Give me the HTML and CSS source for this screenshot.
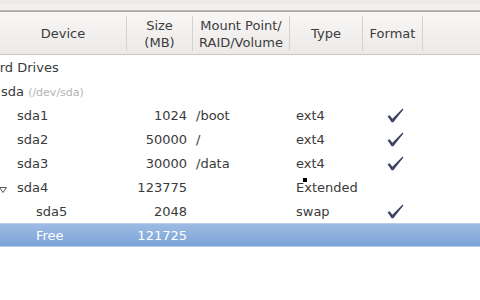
FILE: index.html
```html
<!DOCTYPE html>
<html lang="en">
<head>
    <meta charset="UTF-8">
    <title>Partitions</title>
    <link rel="stylesheet" href="styles.css">
</head>
<body>
<div class="chrome"></div>
<div class="head">
    <div class="hc c-dev">Device</div>
    <div class="hc c-size">Size<br>(MB)</div>
    <div class="hc c-mount">Mount Point/<br>RAID/Volume</div>
    <div class="hc c-type">Type</div>
    <div class="hc c-fmt">Format</div>
    <div class="hc c-rest"></div>
</div>
<div class="rows">
    <div class="row">
        <div class="c-dev"><span class="lvl0">Hard Drives</span></div>
    </div>
    <div class="row">
        <div class="c-dev"><span class="lvl1">sda <small class="path">(/dev/sda)</small></span></div>
    </div>
    <div class="row">
        <div class="c-dev"><span class="lvl2">sda1</span></div>
        <div class="c-size">1024</div>
        <div class="c-mount">/boot</div>
        <div class="c-type">ext4</div>
        <div class="c-fmt"><svg class="check" width="17" height="15" viewBox="0 0 17 15"><path d="M0.5 8.2 L2.6 7.2 L5.4 10.8 L15.6 0.6 L16.4 1.4 L6.3 14.2 L4.6 14.2 Z"/></svg></div>
    </div>
    <div class="row">
        <div class="c-dev"><span class="lvl2">sda2</span></div>
        <div class="c-size">50000</div>
        <div class="c-mount">/</div>
        <div class="c-type">ext4</div>
        <div class="c-fmt"><svg class="check" width="17" height="15" viewBox="0 0 17 15"><path d="M0.5 8.2 L2.6 7.2 L5.4 10.8 L15.6 0.6 L16.4 1.4 L6.3 14.2 L4.6 14.2 Z"/></svg></div>
    </div>
    <div class="row">
        <div class="c-dev"><span class="lvl2">sda3</span></div>
        <div class="c-size">30000</div>
        <div class="c-mount">/data</div>
        <div class="c-type">ext4</div>
        <div class="c-fmt"><svg class="check" width="17" height="15" viewBox="0 0 17 15"><path d="M0.5 8.2 L2.6 7.2 L5.4 10.8 L15.6 0.6 L16.4 1.4 L6.3 14.2 L4.6 14.2 Z"/></svg></div>
    </div>
    <div class="row">
        <div class="c-dev"><svg class="expander" width="8" height="6" viewBox="0 0 8 6"><path d="M0.5 0.5 L7.5 0.5 L4 5.5 Z"/></svg><span class="lvl2">sda4</span></div>
        <div class="c-size">123775</div>
        <div class="c-mount"></div>
        <div class="c-type">Extended<span class="cursor"></span></div>
        <div class="c-fmt"></div>
    </div>
    <div class="row">
        <div class="c-dev"><span class="lvl3">sda5</span></div>
        <div class="c-size">2048</div>
        <div class="c-mount"></div>
        <div class="c-type">swap</div>
        <div class="c-fmt"><svg class="check" width="17" height="15" viewBox="0 0 17 15"><path d="M0.5 8.2 L2.6 7.2 L5.4 10.8 L15.6 0.6 L16.4 1.4 L6.3 14.2 L4.6 14.2 Z"/></svg></div>
    </div>
    <div class="row selected">
        <div class="c-dev"><span class="lvl3">Free</span></div>
        <div class="c-size">121725</div>
        <div class="c-mount"></div>
        <div class="c-type"></div>
        <div class="c-fmt"></div>
    </div>
</div>
</body>
</html>
```

FILE: styles.css
```css
body {
    margin: 0;
    background-color: #ffffff;
    font-family: "DejaVu Sans", sans-serif;
    font-size: 13px;
    color: #3a3a3a;
    overflow: hidden;
}
.chrome {
    height: 4px;
    background-color: #ecebea;
    border-bottom: 1px solid #bdbcbb;
    padding-bottom: 6px;
    background-clip: content-box;
    box-shadow: inset 0 -6px 0 #f1f0ef;
}
.head {
    display: flex;
    height: 42px;
    border-top: 1px solid #a9a8a7;
    border-bottom: 1px solid #c9c8c7;
    background: linear-gradient(#f8f7f6, #ebeae9);
    color: #3c3c3c;
}
.hc {
    display: flex;
    align-items: center;
    justify-content: center;
    text-align: center;
    line-height: 17px;
    margin: 4px 0 3px;
    border-right: 1px solid #d3d2d1;
}
.hc.c-rest {
    border-right: none;
    flex: 1;
}
.c-dev { width: 126px; }
.c-size { width: 65px; }
.c-mount { width: 96px; }
.c-type { width: 72px; }
.c-fmt { width: 59px; }
.rows {
    display: flex;
    flex-direction: column;
}
.row {
    display: flex;
    height: 24px;
    align-items: center;
    white-space: nowrap;
}
.row > div {
    overflow: hidden;
}
.row .c-dev {
    width: 127px;
    position: relative;
    overflow: visible;
}
.row .c-size {
    width: 66px;
    text-align: right;
    padding-right: 6px;
    box-sizing: border-box;
}
.row .c-mount {
    width: 97px;
    padding-left: 3px;
    box-sizing: border-box;
}
.row .c-type {
    width: 73px;
    padding-left: 6px;
    box-sizing: border-box;
    position: relative;
    overflow: visible;
}
.row .c-fmt {
    width: 60px;
    display: flex;
    justify-content: center;
    padding-left: 4px;
    box-sizing: border-box;
}
.lvl0 { margin-left: -18px; }
.lvl1 { margin-left: 1px; }
.lvl2 { margin-left: 17px; }
.lvl3 { margin-left: 36px; }
.path {
    font-size: 11px;
    color: #b4b4b4;
}
.check {
    display: block;
    fill: #3d4260;
}
.expander {
    position: absolute;
    left: -1px;
    top: 7px;
    fill: #ffffff;
    stroke: #555555;
    stroke-width: 1;
}
.cursor {
    position: absolute;
    left: 13px;
    top: -2px;
    width: 4px;
    height: 4px;
    background-color: #000000;
}
.selected {
    background: linear-gradient(#9dbbe3, #7ba3d8);
    border-top: 1px solid #b9cdea;
    border-bottom: 1px solid #b9cdea;
    box-sizing: border-box;
    color: #ffffff;
}
```
